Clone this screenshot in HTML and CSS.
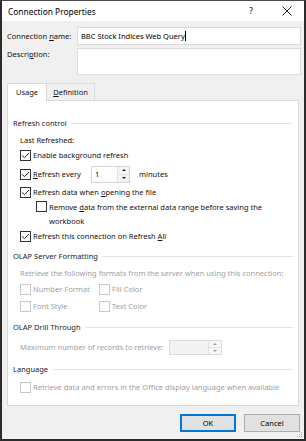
FILE: index.html
```html
<!DOCTYPE html>
<html lang="en">
<head>
  <meta charset="UTF-8">
  <title>Connection Properties</title>
  <link rel="stylesheet" href="styles.css">
</head>
<body>
  <div class="dialog">
    <div class="titlebar">
      <span class="title">Connection Properties</span>
      <span class="help">?</span>
      <span class="close">
        <svg width="10" height="10" viewBox="0 0 10 10"><path d="M0.5 0.5 L9.5 9.5 M9.5 0.5 L0.5 9.5" stroke="#222" stroke-width="1" fill="none"/></svg>
      </span>
    </div>

    <div class="content">
      <div class="field">
        <label class="field-label">Connection <u>n</u>ame:</label>
        <div class="textbox">BBC Stock Indices Web Query<span class="caret"></span></div>
      </div>
      <div class="field field-desc">
        <label class="field-label">Descri<u>p</u>tion:</label>
        <div class="textbox textarea"></div>
      </div>

      <div class="tabs">
        <div class="tab tab-active">Usa<u>g</u>e</div>
        <div class="tab"><u>D</u>efinition</div>
      </div>

      <div class="panel">
        <div class="group-title">Refresh control</div>
        <div class="note">Last Refreshed:</div>
        <div class="check">
          <span class="cb"><svg width="9" height="9" viewBox="0 0 9 9"><path d="M1.2 4.4 L3.5 6.7 L8 2" stroke="#222" fill="none"/></svg></span>
          <span>Enable back<u>g</u>round refresh</span>
        </div>
        <div class="check check-spin">
          <span class="cb"><svg width="9" height="9" viewBox="0 0 9 9"><path d="M1.2 4.4 L3.5 6.7 L8 2" stroke="#222" fill="none"/></svg></span>
          <span class="spin-label"><u>R</u>efresh every</span>
          <span class="spin">
            <span class="spin-value">1</span>
            <span class="spin-btns">
              <span class="spin-btn"><i class="arrow-up"></i></span>
              <span class="spin-btn"><i class="arrow-down"></i></span>
            </span>
          </span>
          <span class="minutes">minutes</span>
        </div>
        <div class="check">
          <span class="cb"><svg width="9" height="9" viewBox="0 0 9 9"><path d="M1.2 4.4 L3.5 6.7 L8 2" stroke="#222" fill="none"/></svg></span>
          <span>Refresh data when <u>o</u>pening the file</span>
        </div>
        <div class="check check-sub">
          <span class="cb"></span>
          <span>Remove <u>d</u>ata from the external data range before saving the<br>workbook</span>
        </div>
        <div class="check">
          <span class="cb"><svg width="9" height="9" viewBox="0 0 9 9"><path d="M1.2 4.4 L3.5 6.7 L8 2" stroke="#222" fill="none"/></svg></span>
          <span>Refresh this connection on Refresh <u>A</u>ll</span>
        </div>

        <div class="group-title group-next">OLAP Server Formatting</div>
        <div class="note note-disabled">Retrieve the following formats from the server when using this connection:</div>
        <div class="formats">
          <div class="check check-disabled"><span class="cb"></span><span>Number Format</span></div>
          <div class="check check-disabled"><span class="cb"></span><span>Fill Color</span></div>
          <div class="check check-disabled"><span class="cb"></span><span>Font Style</span></div>
          <div class="check check-disabled"><span class="cb"></span><span>Text Color</span></div>
        </div>

        <div class="group-title group-drill">OLAP Drill Through</div>
        <div class="records">
          <span class="records-label">Maximum number of records to retrieve:</span>
          <span class="spin spin-disabled">
            <span class="spin-value"></span>
            <span class="spin-btns">
              <span class="spin-btn"><i class="arrow-up"></i></span>
              <span class="spin-btn"><i class="arrow-down"></i></span>
            </span>
          </span>
        </div>

        <div class="group-title group-lang">Language</div>
        <div class="check check-disabled check-lang"><span class="cb"></span><span>Retrieve data and errors in the Office display language when available</span></div>
      </div>

      <div class="actions">
        <button class="btn btn-default">OK</button>
        <button class="btn">Cancel</button>
      </div>
    </div>

    <svg class="grip" width="7" height="7" viewBox="0 0 7 7">
      <rect x="5" y="1" width="1" height="1" fill="#a0a0a0"/>
      <rect x="3" y="3" width="1" height="1" fill="#a0a0a0"/>
      <rect x="5" y="3" width="1" height="1" fill="#a0a0a0"/>
      <rect x="1" y="5" width="1" height="1" fill="#a0a0a0"/>
      <rect x="3" y="5" width="1" height="1" fill="#a0a0a0"/>
      <rect x="5" y="5" width="1" height="1" fill="#a0a0a0"/>
    </svg>
  </div>
</body>
</html>
```

FILE: styles.css
```css
body {
  margin: 0;
  font-family: "Noto Sans", "Open Sans", sans-serif;
  font-size: 7.5px;
  color: #111;
}
u {
  text-underline-offset: 1px;
}

.dialog {
  position: relative;
  width: 306px;
  height: 441px;
  box-sizing: border-box;
  border: 2px solid #2b2b2b;
  border-top: 1px solid #4a4a4a;
  background: #f0f0f0;
}

/* title bar */
.titlebar {
  height: 20px;
  background: #fff;
  display: flex;
  align-items: center;
  padding-left: 6px;
  font-size: 8.4px;
  color: #000;
}
.title {
  flex: 1;
}
.help {
  width: 10px;
  text-align: center;
  margin-right: 26px;
  font-size: 8.6px;
}
.close {
  width: 10px;
  height: 10px;
  margin-right: 12px;
  display: flex;
}

.content {
  padding: 6px 3px 0 5px;
}

/* name + description */
.field {
  display: flex;
}
.field-label {
  width: 70px;
  line-height: 18px;
}
.field-desc {
  margin-top: 3px;
}
.field-desc .field-label {
  line-height: 12px;
}
.textbox {
  flex: 1;
  height: 18px;
  box-sizing: border-box;
  border: 1px solid #dcdcdc;
  background: #fff;
  padding-left: 3px;
  line-height: 16px;
  color: #000;
}
.textarea {
  height: 27px;
}
.caret {
  display: inline-block;
  width: 1px;
  height: 10px;
  background: #000;
  vertical-align: -2px;
}

/* tabs */
.tabs {
  display: flex;
  margin-top: 8px;
}
.tab {
  height: 17px;
  box-sizing: border-box;
  width: 48px;
  border: 1px solid #d9d9d9;
  border-bottom: none;
  text-align: center;
  line-height: 17px;
  background: #f0f0f0;
}
.tab + .tab {
  border-left: none;
}
.tab-active {
  width: 40px;
  background: #fff;
  position: relative;
  z-index: 1;
  margin-bottom: -1px;
  height: 18px;
}

.panel {
  height: 306px;
  box-sizing: border-box;
  margin-right: 2px;
  border: 1px solid #d9d9d9;
  background: #fff;
  padding: 15px 5px 0 5px;
}

.group-title {
  display: flex;
  align-items: center;
  height: 14px;
  color: #222;
}
.group-title::after {
  content: "";
  flex: 1;
  border-top: 1px solid #e3e3e3;
  margin-left: 4px;
}
.group-next {
  margin-top: 5px;
}
.group-drill {
  margin-top: 6px;
}
.group-lang {
  margin-top: 7px;
}

.note {
  padding-left: 7px;
  height: 14px;
  line-height: 14px;
  margin-top: 3px;
  white-space: nowrap;
}
.note-disabled {
  color: #a0a0a0;
}

.check {
  display: flex;
  align-items: center;
  padding-left: 7px;
  height: 16px;
  white-space: nowrap;
}
.cb {
  width: 11px;
  height: 11px;
  box-sizing: border-box;
  border: 1px solid #333;
  background: #fff;
  margin-right: 2px;
  flex: none;
  display: flex;
}
.check-spin {
  height: 20px;
  margin-top: 1px;
}
.check-sub {
  padding-left: 23px;
  height: auto;
  align-items: flex-start;
  line-height: 14px;
}
.check-sub .cb {
  margin-top: 1px;
}
.check-disabled {
  color: #a0a0a0;
}
.check-disabled .cb {
  border-color: #c8c8c8;
}
.check-lang {
  margin-top: 3px;
}

/* spin boxes */
.spin-label {
  width: 58px;
}
.spin {
  display: flex;
  width: 39px;
  height: 17px;
  box-sizing: border-box;
  border: 1px solid #d4d4d4;
  background: #fff;
}
.spin-value {
  flex: 1;
  padding-left: 3px;
  line-height: 15px;
  color: #000;
}
.spin-btns {
  width: 11px;
  display: flex;
  flex-direction: column;
  border-left: 1px solid #e2e2e2;
}
.spin-btn {
  flex: 1;
  display: flex;
  align-items: center;
  justify-content: center;
  background: #f4f4f4;
}
.spin-btn + .spin-btn {
  border-top: 1px solid #e2e2e2;
}
.arrow-up,
.arrow-down {
  width: 0;
  height: 0;
  border-left: 2px solid transparent;
  border-right: 2px solid transparent;
}
.arrow-up {
  border-bottom: 2px solid #222;
}
.arrow-down {
  border-top: 2px solid #222;
}
.minutes {
  margin-left: 9px;
}
.spin-disabled {
  width: 53px;
  height: 15px;
  background: #f2f2f2;
  border-color: #dadada;
}
.spin-disabled .spin-btns {
  width: 12px;
}
.spin-disabled .spin-btn {
  background: #f7f7f7;
}
.spin-disabled .arrow-up {
  border-bottom-color: #9a9a9a;
}
.spin-disabled .arrow-down {
  border-top-color: #9a9a9a;
}

.formats {
  display: grid;
  grid-template-columns: 79px auto;
  row-gap: 1px;
  margin-top: 1px;
}

.records {
  display: flex;
  align-items: center;
  height: 16px;
  margin-top: 5px;
  padding-left: 7px;
  color: #a0a0a0;
  white-space: nowrap;
}
.records-label {
  width: 149px;
}

/* buttons */
.actions {
  display: flex;
  justify-content: flex-end;
  gap: 8px;
  margin-top: 8px;
  padding-right: 1px;
}
.btn {
  width: 56px;
  height: 18px;
  box-sizing: border-box;
  border: 1px solid #adadad;
  background: #e1e1e1;
  font-family: inherit;
  font-size: 7.5px;
  color: #000;
  padding: 0;
}
.btn-default {
  border: 1px solid #0078d7;
  box-shadow: inset 0 0 0 1px #0078d7;
}

.grip {
  position: absolute;
  right: 1px;
  bottom: 1px;
}
```
